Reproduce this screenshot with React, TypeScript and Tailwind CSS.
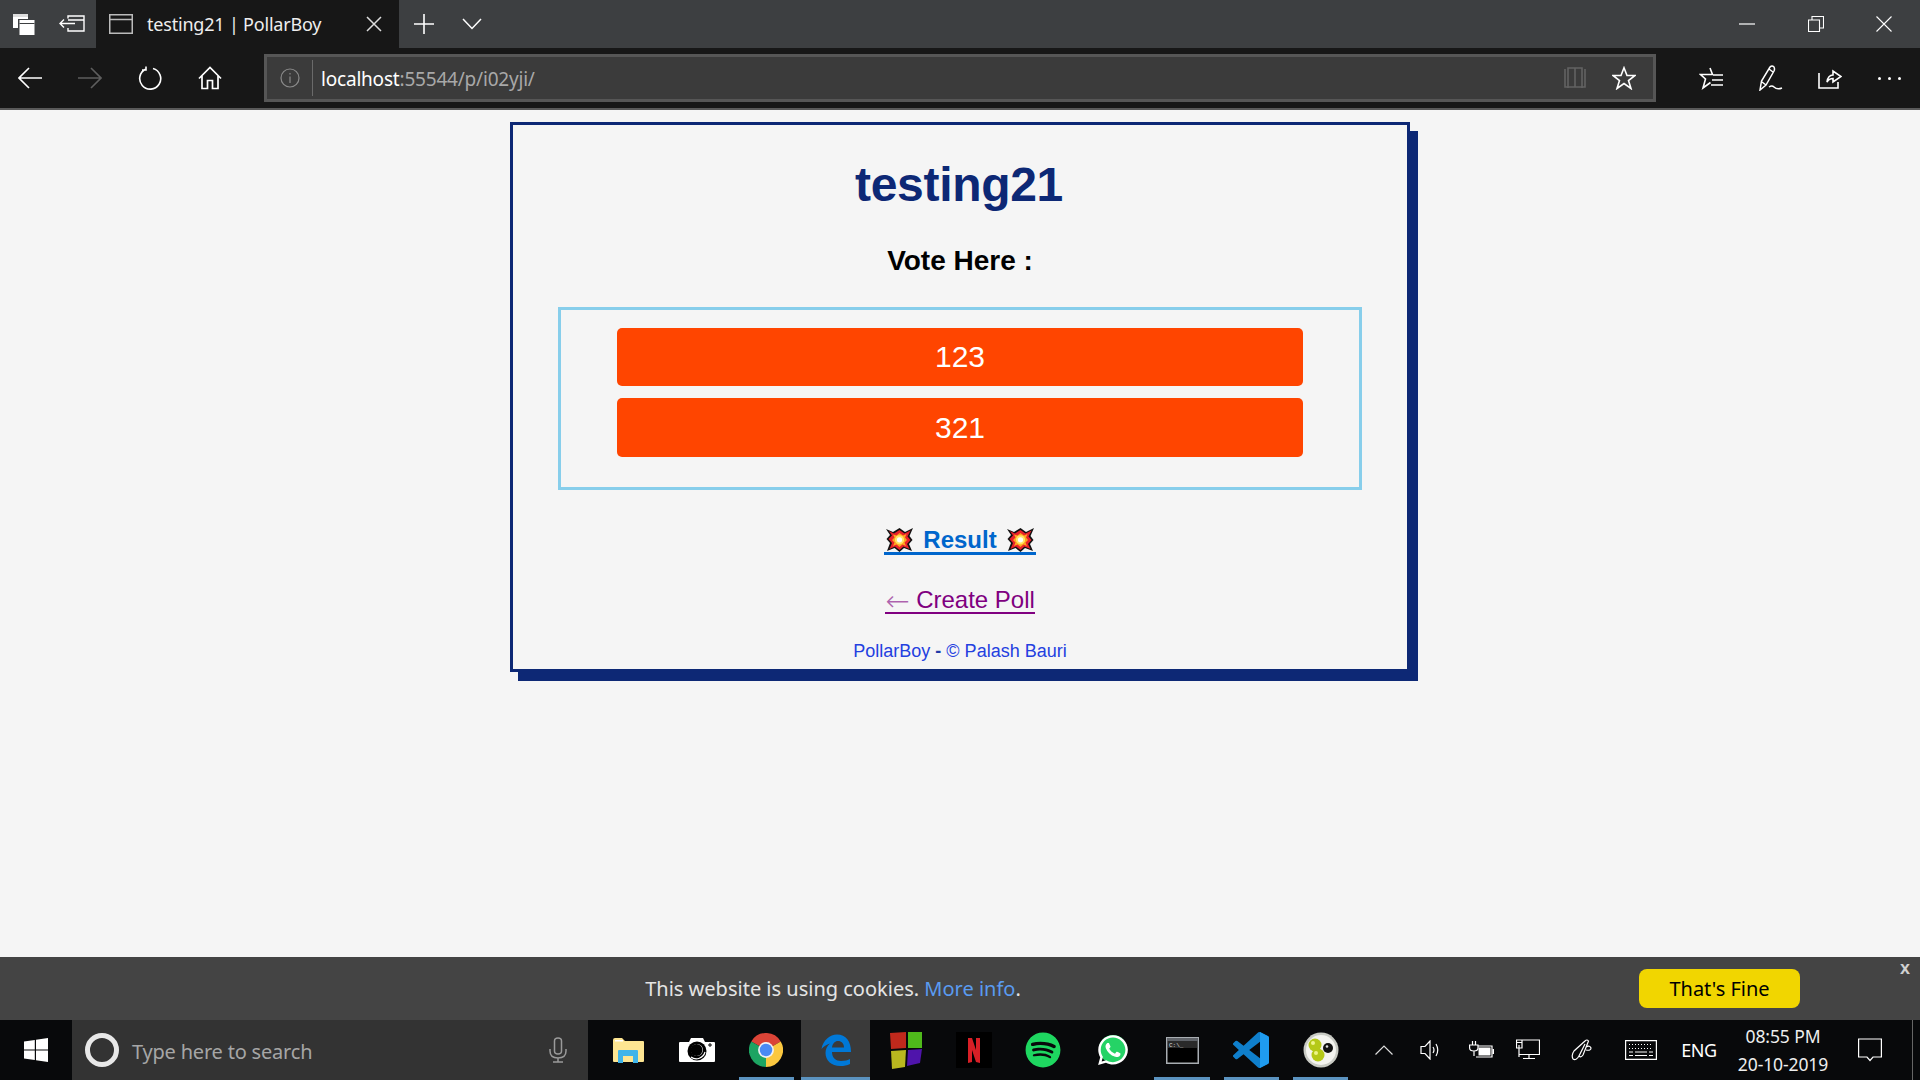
import React from 'react';
import { FaSpotify, FaWhatsapp } from 'react-icons/fa';

const Line = ({ d, w = 24, h = 24, color = '#fff', sw = 1.5 }: { d: string; w?: number; h?: number; color?: string; sw?: number }) => (
  <svg width={w} height={h} viewBox={`0 0 ${w} ${h}`} fill="none" stroke={color} strokeWidth={sw}>
    <path d={d} />
  </svg>
);

const Slot = ({ w, children }: { w: string; children: React.ReactNode }) => (
  <div className={`${w} h-full flex items-center justify-center shrink-0`}>{children}</div>
);

const Boom = () => (
  <svg width="27" height="25" viewBox="0 0 27 25" className="shrink-0">
    <polygon points="0,2 7,5 13.5,1 19,5 27,1 23.5,9 26.5,13 23,17 26,24 18,21 13.5,25 8.5,21 1,24 4,16 0.5,12 4,8" fill="#111" />
    <polygon points="3,4 8,6.5 13.5,3 18.5,6.5 24.5,3.5 21.5,9.5 24.5,13 21,17 23.5,22 17.5,19.5 13.5,23 9,19.5 3.5,22 6,16 2.5,12 6,8.5" fill="#e8222a" />
    <polygon points="7,7.5 10.5,8.5 13.5,6 17,8.5 20.5,7 19,10.5 21,13 18.5,15.5 20,19 16.5,17.5 13.5,20 10.5,17.5 7,19 8.5,15.5 6,13 8.5,10.5" fill="#ffa51f" />
    <circle cx="13.5" cy="12.8" r="4.6" fill="#ffe566" />
    <circle cx="13.5" cy="12.8" r="2.6" fill="#fff" />
  </svg>
);

const Explorer = () => (
  <svg width="32" height="26" viewBox="0 0 32 26">
    <path d="M1 3 Q1 1 3 1 H10 L13 4 H31 Q32 4 32 5 V24 Q32 25 31 25 H2 Q1 25 1 24 Z" fill="#fde592" />
    <rect x="3" y="3" width="8" height="1.5" fill="#fff" />
    <path d="M6 26 V14 Q6 13 7 13 H25 Q26 13 26 14 V26 H21 V19 H11 V26 Z" fill="#3fb4ea" />
  </svg>
);

const Camera = () => (
  <svg width="36" height="26" viewBox="0 0 36 26">
    <path d="M1 5 H10 L12 1 H24 L26 5 H35 Q36 5 36 6 V24 Q36 25 35 25 H1 Q0 25 0 24 V6 Q0 5 1 5 Z" fill="#fff" />
    <circle cx="18" cy="14" r="9.5" fill="#000" />
    <path d="M12 20 A9 9 0 0 0 26 15" stroke="#fff" strokeWidth="1.2" fill="none" />
    <circle cx="18" cy="13" r="6" fill="#fff" />
    <circle cx="17.5" cy="13" r="6" fill="#000" />
    <path d="M31 6 V10 M29 8 H33" stroke="#000" strokeWidth="1" />
  </svg>
);

const Chrome = () => (
  <svg width="34" height="34" viewBox="0 0 36 36">
    <path d="M18 18 L2.4 9 A18 18 0 0 1 33.6 9 Z" fill="#db4437" />
    <path d="M18 18 L33.6 9 A18 18 0 0 1 18 36 Z" fill="#fbc840" />
    <path d="M18 18 L18 36 A18 18 0 0 1 2.4 9 Z" fill="#1da462" />
    <circle cx="18" cy="18" r="8.4" fill="#f1f1f1" />
    <circle cx="18" cy="18" r="6.6" fill="#4a8af4" />
  </svg>
);

const Edge = () => (
  <svg width="30" height="32" viewBox="0 0 30 32">
    <path
      fill="#0078d7"
      fillRule="evenodd"
      d="M0.5 15 C2 6 9 0.5 16 0.5 C25 0.5 30 7 30 18 H11 C11 24 15 27 20 27 C24 27 27 26 29 25 V30 C26 31.5 23 32 19.5 32 C10 32 4.5 26 4.5 19 C4.5 15 6 12 9 9.5 C5.5 10.5 2.5 12.5 0.5 15 Z M11 13.5 H23 C23 9.5 20.5 7 17 7 C14 7 11.5 9.5 11 13.5 Z"
    />
  </svg>
);

const Squares = () => (
  <svg width="34" height="38" viewBox="0 0 34 38" className="ml-[3px]">
    <polygon points="1,2 17,1 17,17 2,18" fill="#c0291c" />
    <polygon points="19,1 33,1 33,17 19,17" fill="#4fb91b" />
    <polygon points="2,20 17,19 16,36 3,38" fill="#b9b71f" />
    <polygon points="19,19 33,18 31,32 18,35" fill="#4f14ab" />
  </svg>
);

const Netflix = () => (
  <div className="w-[36px] h-[36px] bg-black flex items-center justify-center">
    <svg width="12" height="25" viewBox="0 0 12 25">
      <polygon points="0,0 4,0 8,12 8,0 12,0 12,25 8,24 4,12 4,24 0,25" fill="#d81f26" />
    </svg>
  </div>
);

const Whatsapp = () => (
  <div className="relative w-[34px] h-[34px]">
    <div className="absolute left-[3px] top-[2px] w-[28px] h-[28px] rounded-full bg-[#25d366]" />
    <FaWhatsapp className="absolute inset-0 text-white" size={34} />
  </div>
);

const Cmd = () => (
  <svg width="33" height="27" viewBox="0 0 33 27">
    <rect x="0.75" y="0.75" width="31.5" height="25.5" fill="#000" stroke="#a9aeb3" strokeWidth="1.5" />
    <rect x="1" y="1" width="31" height="3" fill="#60646a" />
    <rect x="2" y="4" width="29" height="7" fill="#2a2a2a" />
    <text x="3" y="10" fontSize="6" fill="#ddd" fontFamily="Liberation Mono, monospace">C:\_</text>
  </svg>
);

const VsCode = () => (
  <svg width="36" height="36" viewBox="0 0 24 24">
    <path fill="#0f7fcc" d="M23.15 2.587L18.21.21a1.494 1.494 0 0 0-1.705.29l-9.46 8.63-4.12-3.128a.999.999 0 0 0-1.276.057L.327 7.261A1 1 0 0 0 .326 8.74L3.899 12 .326 15.26a1 1 0 0 0 .001 1.479L1.65 17.94a.999.999 0 0 0 1.276.057l4.12-3.128 9.46 8.63a1.492 1.492 0 0 0 1.704.29l4.942-2.377A1.5 1.5 0 0 0 24 20.06V3.939a1.5 1.5 0 0 0-.85-1.352zm-5.146 14.861L10.826 12l7.178-5.448v10.896z" />
    <path fill="#1f9cf0" d="M18.004 0 L23.15 2.587 A1.5 1.5 0 0 1 24 3.939 V20.06 A1.5 1.5 0 0 1 23.15 21.412 L18.004 24 Z" />
  </svg>
);

const Marbles = () => (
  <svg width="36" height="36" viewBox="0 0 36 36">
    <circle cx="18" cy="18" r="17.5" fill="#c9cbc4" />
    <circle cx="18" cy="18" r="15" fill="#f4f4f0" />
    <circle cx="25" cy="16" r="5" fill="#111" />
    <circle cx="24" cy="14.5" r="1.3" fill="#ddd" />
    <circle cx="12" cy="13" r="6.5" fill="#b5c918" />
    <circle cx="15" cy="23" r="6.5" fill="#b5c918" />
    <circle cx="10" cy="11" r="2" fill="#eef58a" />
    <circle cx="13" cy="21" r="2" fill="#eef58a" />
  </svg>
);

const Battery = () => (
  <svg width="25" height="18" viewBox="0 0 25 18" fill="none" stroke="#fff" strokeWidth="1.2">
    <path d="M3.5 0 V4 M6.5 0 V4 M.6 4 H9 V7 Q9 10 5 10 Q.6 10 .6 7 Z M5 10 V15 M9 5 H23 V16 H7" />
    <rect x="9.5" y="6.5" width="12" height="8" fill="#fff" stroke="none" />
    <rect x="23.5" y="8" width="1.5" height="5" fill="#fff" stroke="none" />
  </svg>
);

const Keyboard = () => (
  <svg width="32" height="20" viewBox="0 0 32 20" fill="none" stroke="#fff" strokeWidth="1.2">
    <path d="M.6 .6 H31.4 V19.4 H.6 Z" />
    <path d="M4 4.5 H28 M4 8.5 H28" strokeDasharray="1 2" strokeWidth="1" />
    <path d="M4 12 H8 M10 12 H22 M24 12 H28 M4 15.5 H8 M10 15.5 H22 M24 15.5 H28" strokeWidth="1" />
  </svg>
);

function TaskIcon({ children, active, open }: { children: React.ReactNode; active?: boolean; open?: boolean }) {
  return (
    <div className={`relative w-[69.3px] h-full flex items-center justify-center shrink-0 ${active ? 'bg-[#3a3a3a]' : ''}`}>
      {children}
      {open && <div className={`absolute bottom-0 h-[3px] bg-[#5b93c0] ${active ? 'inset-x-0' : 'inset-x-[7px]'}`} />}
    </div>
  );
}

export default function App() {
  const ui = { fontFamily: '"Noto Sans", sans-serif' };
  const arial = { fontFamily: '"Liberation Sans", Arial, sans-serif' };

  return (
    <div className="w-[1920px] h-[1080px] flex flex-col overflow-hidden bg-[#f5f5f5]" style={ui}>
      {/* title bar */}
      <div className="h-[48px] flex items-center bg-[#3d3f41] shrink-0 pr-[2px]">
        <Slot w="w-[48px]">
          <svg width="24" height="24" viewBox="0 0 24 24">
            <rect x="1" y="2" width="15" height="14" fill="#fff" />
            <rect x="1" y="2" width="15" height="3" fill="#ddd" />
            <rect x="6" y="7" width="17" height="15" fill="#3d3f41" />
            <rect x="7.5" y="8" width="15" height="15" fill="#fff" />
            <rect x="7.5" y="11" width="15" height="1" fill="#3d3f41" />
          </svg>
        </Slot>
        <Slot w="w-[48px]">
          <Line w={26} h={20} sw={1.4} d="M9 4.5 V2 H25 V17 H9 V14 M9 6 H25 M1 9.5 H16 M5 5.5 L1 9.5 L5 13.5" />
        </Slot>
        <div className="w-[303px] h-full bg-[#171717] flex items-center shrink-0">
          <div className="w-[13px]" />
          <Line w={24} h={20} color="#bbb" d="M.75 .75 H23.25 V19.25 H.75 Z M.75 5.5 H23.25" />
          <span className="ml-[14px] text-[18px] tracking-[-0.2px] text-[#eee] whitespace-nowrap w-[200px]">testing21 | PollarBoy</span>
          <div className="ml-[19px]">
            <Line w={16} h={16} color="#ddd" d="M1 1 L15 15 M15 1 L1 15" />
          </div>
        </div>
        <div className="ml-[14px]">
          <Line w={22} h={22} sw={1.6} d="M11 1 V21 M1 11 H21" />
        </div>
        <div className="ml-[27px]">
          <Line w={20} h={12} sw={1.5} d="M1 1 L10 10.5 L19 1" />
        </div>
        <div className="flex-1" />
        <Slot w="w-[68px]"><Line w={16} h={2} d="M0 1 H16" sw={1.2} /></Slot>
        <Slot w="w-[69px]"><Line w={16} h={16} sw={1.1} d="M.5 4 H11.5 V15.5 H.5 Z M4 4 V.5 H15.5 V12 H11.5" /></Slot>
        <Slot w="w-[68px]"><Line w={16} h={16} sw={1.1} d="M.5 .5 L15.5 15.5 M15.5 .5 L.5 15.5" /></Slot>
      </div>

      {/* nav bar */}
      <div className="h-[60px] flex items-center bg-[#171717] shrink-0">
        <Slot w="w-[60px]"><Line w={24} h={22} sw={1.6} d="M24 11 H1.5 M11 1 L1 11 L11 21" /></Slot>
        <Slot w="w-[60px]"><Line w={24} h={22} sw={1.6} color="#5e5e5e" d="M0 11 H22.5 M13 1 L23 11 L13 21" /></Slot>
        <Slot w="w-[60px]"><Line w={24} h={24} sw={1.6} d="M8 3 A10.5 10.5 0 1 0 15 2.5 M8 .5 V4 H4" /></Slot>
        <Slot w="w-[60px]"><Line w={24} h={24} sw={1.7} d="M1 12.5 L12 1.5 L23 12.5 M4 10 V22.5 H9.5 V14.5 H14.5 V22.5 H20 V10" /></Slot>
        <div className="w-[24px] shrink-0" />
        <div className="w-[1392px] h-[48px] bg-[#3b3b3b] border-[3px] border-[#565656] flex items-center shrink-0">
          <div className="w-[45px] h-full flex items-center justify-center">
            <svg width="20" height="20" viewBox="0 0 20 20" fill="none" stroke="#8a8a8a" strokeWidth="1.2">
              <circle cx="10" cy="10" r="9" />
              <path d="M10 8.5 V15 M10 5 V6.5" />
            </svg>
          </div>
          <div className="w-px h-[36px] bg-[#6a6a6a]" />
          <span className="ml-[8px] mt-[2px] text-[19px] tracking-[-0.2px] whitespace-nowrap text-white">
            localhost<span className="text-[#a8a8a8]">:55544/p/i02yji/</span>
          </span>
          <div className="flex-1" />
          <Line w={24} h={24} color="#636363" sw={1.6} d="M2 3 V21 H22 V3 M5 22 V2 H12 V21 M12 21 V2 H19 V22" />
          <div className="w-[25px]" />
          <svg width="24" height="24" viewBox="0 0 24 24" fill="none" stroke="#fff" strokeWidth="1.6">
            <polygon points="12,1.8 15,9.5 23,9.5 16.5,14.5 19,22.5 12,17.5 5,22.5 7.5,14.5 1,9.5 9,9.5" />
          </svg>
          <div className="w-[17px]" />
        </div>
        <div className="w-[25px] shrink-0" />
        <Slot w="w-[60px]"><Line w={24} h={24} sw={1.6} d="M11 2 L13.5 8.5 H1.5 L6.5 13 L4 22 L11.5 16.5 M14 9 H24 M13 14 H24 M12 19 H24" /></Slot>
        <Slot w="w-[59px]"><Line w={24} h={26} sw={1.5} d="M1 25 L2.5 16 L11 2 Q13 0 15 2 Q16 4 15 6 L7 20 Z M3 17 L7 20 M10 4 L14 7 M10 22 Q13 20 15 22 Q18 25 23 23" /></Slot>
        <Slot w="w-[59px]"><Line w={24} h={22} sw={1.6} d="M1 6 V21 H20 V15 M9 15 Q10 8 15 8 V4 L23 9.5 L15 15 V11.5 Q11 11.5 9 15 Z" /></Slot>
        <Slot w="w-[60px]">
          <div className="flex gap-[7px]">
            <div className="w-[3px] h-[3px] bg-white rounded-full" />
            <div className="w-[3px] h-[3px] bg-white rounded-full" />
            <div className="w-[3px] h-[3px] bg-white rounded-full" />
          </div>
        </Slot>
      </div>
      <div className="h-[2px] bg-[#5a5a5a] shrink-0" />

      {/* page */}
      <div className="flex-1 min-h-0 pt-[12px]" style={arial}>
        <div className="w-[900px] h-[550px] mx-auto border-[3px] border-[#0d2875] shadow-[8px_9px_0_#0d2875] flex flex-col items-center">
          <h1 className="mt-[32px] mr-[2px] text-[48px] leading-[55px] font-bold tracking-[-0.3px] text-[#0d2875]">testing21</h1>
          <h2 className="mt-[33px] text-[28px] leading-[32px] font-bold text-black">Vote Here :</h2>
          <div className="mt-[30px] w-[804px] h-[183px] border-[3px] border-[#87ceeb] flex flex-col items-center pt-[18px] gap-[12px]">
            <button className="w-[686px] h-[58px] pb-[2px] rounded-[5px] bg-[#ff4500] text-white text-[30px]">123</button>
            <button className="w-[686px] h-[59px] pb-[1px] rounded-[5px] bg-[#ff4500] text-white text-[30px]">321</button>
          </div>
          <a className="mt-[37px] flex items-center gap-[10px] border-b-[3px] border-[#0066cc] text-[24px] leading-[25px] font-bold text-[#0066cc] px-[2px]">
            <Boom />
            <span>Result</span>
            <Boom />
          </a>
          <a className="mt-[33px] flex gap-[7px] border-b-2 border-[#800080] text-[24px] leading-[24px] text-[#800080]">
            <span className="w-[24px] text-[29px] font-light opacity-60 translate-y-[1px]" style={{ fontFamily: '"DejaVu Sans", sans-serif' }}>←</span>
            <span>Create Poll</span>
          </a>
          <div className="mt-[27px] text-[18px] leading-[21px] text-[#2340e0] whitespace-nowrap">
            PollarBoy <b className="text-[#1e3aa8]">-</b> © Palash Bauri
          </div>
        </div>
      </div>

      {/* cookie bar */}
      <div className="relative h-[63px] bg-[#444444] flex items-center justify-center shrink-0">
        <p className="text-[20px] text-[#e4e4e4] -translate-x-[127px]">
          This website is using cookies. <a className="text-[#5a9bf0]">More info</a>.
        </p>
        <button className="absolute left-[1639px] top-[12px] w-[161px] h-[39px] rounded-[8px] bg-[#f1d600] text-black text-[20px]">That's Fine</button>
        <span className="absolute right-[10px] top-[-2px] text-[18px] font-bold text-[#d0d0d0]" style={arial}>x</span>
      </div>

      {/* taskbar */}
      <div className="h-[60px] flex bg-[#08090b] shrink-0">
        <Slot w="w-[72px]">
          <svg width="24" height="24" viewBox="0 0 24 24" fill="#fff">
            <path d="M0 3.5 L10.8 2 V11.4 H0 Z M12 1.8 L24 0 V11.4 H12 Z M0 12.6 H10.8 V22 L0 20.5 Z M12 12.6 H24 V24 L12 22.2 Z" />
          </svg>
        </Slot>
        <div className="w-[516px] bg-[#333333] flex items-center shrink-0">
          <div className="ml-[13px] w-[34px] h-[34px] rounded-full border-[5px] border-[#e8e8e8]" />
          <span className="ml-[13px] mt-[3px] text-[20px] tracking-[-0.2px] text-[#a6a6a6]">Type here to search</span>
          <div className="flex-1" />
          <div className="mr-[21px]">
            <Line w={18} h={26} color="#9a9a9a" sw={1.5} d="M5.5 4 Q5.5 1 9 1 Q12.5 1 12.5 4 V14 Q12.5 17 9 17 Q5.5 17 5.5 14 Z M1 12 V14 Q1 21 9 21 Q17 21 17 14 V12 M9 21 V25 M4 25 H14" />
          </div>
        </div>
        <div className="w-[5px]" />
        <TaskIcon><Explorer /></TaskIcon>
        <TaskIcon><Camera /></TaskIcon>
        <TaskIcon open><Chrome /></TaskIcon>
        <TaskIcon open active><Edge /></TaskIcon>
        <TaskIcon><Squares /></TaskIcon>
        <TaskIcon><Netflix /></TaskIcon>
        <TaskIcon><FaSpotify size={36} color="#1ed760" /></TaskIcon>
        <TaskIcon><Whatsapp /></TaskIcon>
        <TaskIcon open><Cmd /></TaskIcon>
        <TaskIcon open><VsCode /></TaskIcon>
        <TaskIcon open><Marbles /></TaskIcon>
        <div className="flex-1" />
        <div className="flex h-full items-center text-white">
          <Slot w="w-[48px]"><Line w={18} h={10} sw={1.2} color="#ddd" d="M.5 9.5 L9 1 L17.5 9.5" /></Slot>
          <Slot w="w-[48px]"><Line w={24} h={20} sw={1.2} d="M1 6.5 H5 L10 1 V19 L5 13.5 H1 Z M13 7 Q15 10 13 13 M16 4 Q19.5 10 16 16" /></Slot>
          <Slot w="w-[50px]"><Battery /></Slot>
          <Slot w="w-[44px]"><Line w={24} h={22} sw={1.2} d="M.5 1 H6 V9 H.5 Z M.5 3.5 H6 M3 6 V18 M6 1 H23.5 V15.5 H3 M13 15.5 V19.5 M7 19.5 H19" /></Slot>
          <Slot w="w-[64px]"><Line w={22} h={22} sw={1.2} d="M2 20 Q0 16 3 12 L14 2 Q16 0 17.5 2 L12 16 Q10 19 8 17 L14 5 M2 20 Q5 22 8 17 M15 8 Q19 6 20 9 Q20 12 15 11" /></Slot>
          <Slot w="w-[54px]"><Keyboard /></Slot>
          <Slot w="w-[62px]"><span className="text-[18px] tracking-[-0.5px]">ENG</span></Slot>
          <div className="w-[106px] h-full flex flex-col items-center justify-center text-[17.5px] leading-[28px] text-[#eeeeee] tracking-[-0.1px]">
            <span>08:55 PM</span>
            <span>20-10-2019</span>
          </div>
          <Slot w="w-[68px]"><Line w={24} h={24} sw={1.2} d="M.6 1 H23.4 V19 H15 L12 22.5 L9 19 H.6 Z" /></Slot>
          <div className="w-[8px]" />
          <div className="w-px h-full bg-[#666]" />
          <div className="w-[7px]" />
        </div>
      </div>
    </div>
  );
}
